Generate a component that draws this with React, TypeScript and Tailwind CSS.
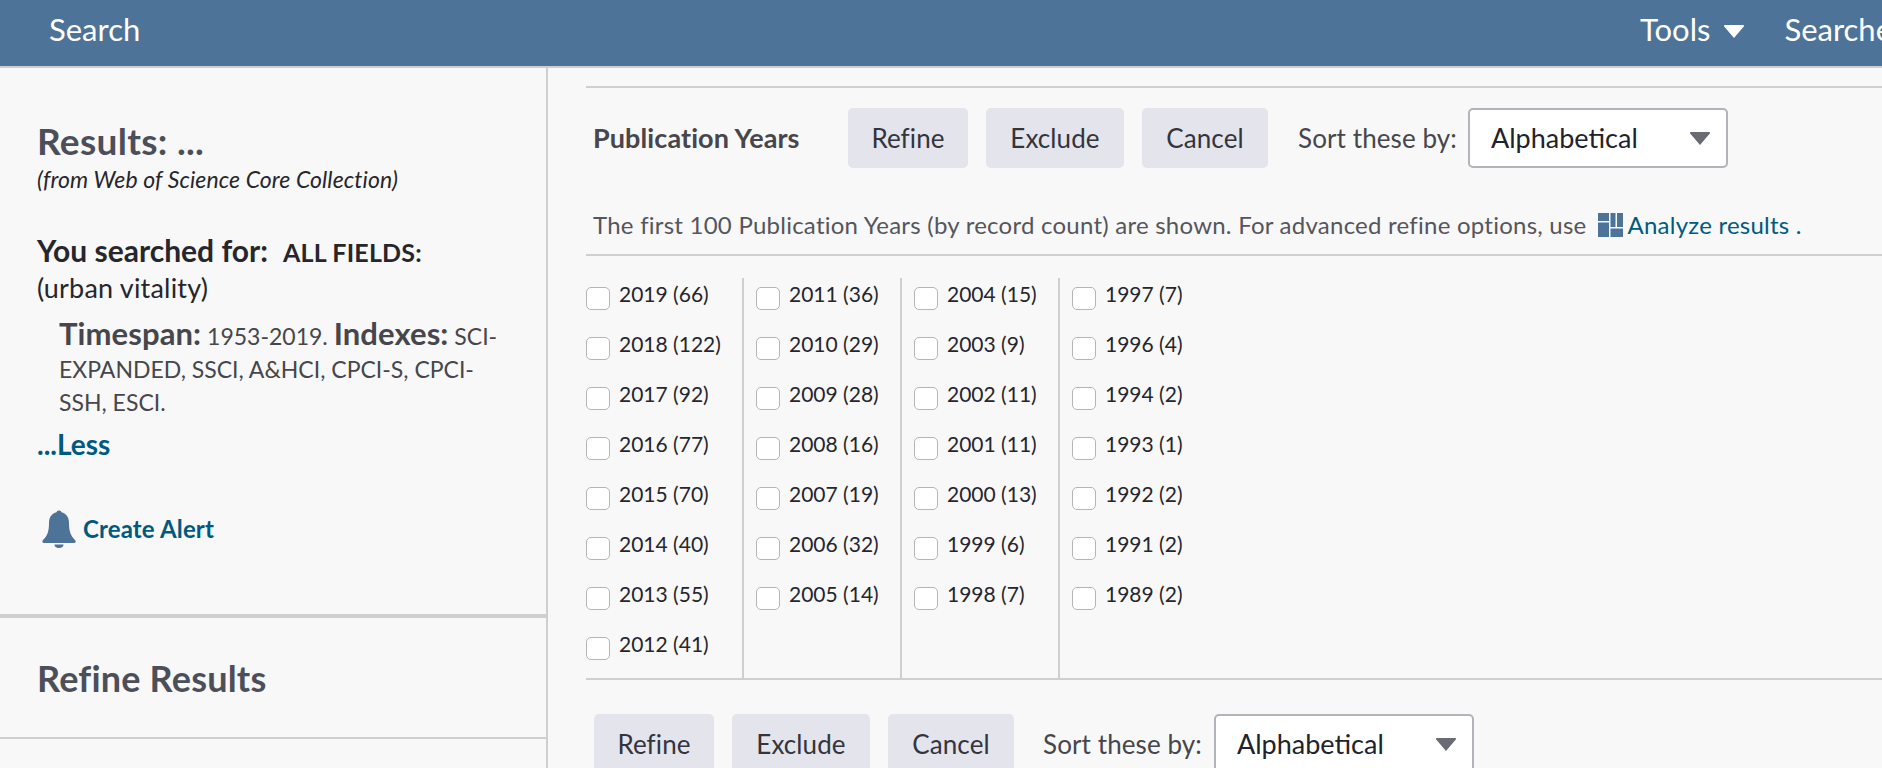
import type { ReactNode } from "react";

const FONT = "font-['Lato','Liberation_Sans',sans-serif]";

const columns = [
  ["2019 (66)", "2018 (122)", "2017 (92)", "2016 (77)", "2015 (70)", "2014 (40)", "2013 (55)", "2012 (41)"],
  ["2011 (36)", "2010 (29)", "2009 (28)", "2008 (16)", "2007 (19)", "2006 (32)", "2005 (14)"],
  ["2004 (15)", "2003 (9)", "2002 (11)", "2001 (11)", "2000 (13)", "1999 (6)", "1998 (7)"],
  ["1997 (7)", "1996 (4)", "1994 (2)", "1993 (1)", "1992 (2)", "1991 (2)", "1989 (2)"],
];

function ActionButton({ children, width }: { children: ReactNode; width: string }) {
  return (
    <button className={`${width} h-[60px] shrink-0 rounded-[5px] bg-[#e3e4ec] text-[26px] tracking-[0.1px] text-[#34343c]`}>
      {children}
    </button>
  );
}

function SortSelect() {
  return (
    <div className="flex items-center shrink-0 w-[260px] h-[60px] rounded-[5px] border-2 border-[#b3b3ba] bg-white pl-[21px] pr-[16px]">
      <span className="flex-1 text-[27px] text-[#22222a]">Alphabetical</span>
      <svg width="20" height="13" viewBox="0 0 20 13" className="fill-[#6a6a74]">
        <path d="M1 0h18c1 0 1.400 1 .8 1.600L10 13 .2 1.600C-.4 1 0 0 1 0z" />
      </svg>
    </div>
  );
}

function ToolbarButtons() {
  return (
    <>
      <ActionButton width="w-[120px]">Refine</ActionButton>
      <ActionButton width="w-[138px] ml-[18px]">Exclude</ActionButton>
      <ActionButton width="w-[126px] ml-[18px]">Cancel</ActionButton>
    </>
  );
}

function YearColumn({ years, first }: { years: string[]; first: boolean }) {
  return (
    <div
      className={
        first
          ? "w-[158px] flex flex-col gap-4 pb-4 border-r-2 border-[#cfcfcf]"
          : "w-[158px] flex flex-col gap-4 pb-4 pl-[12px] border-r-2 border-[#cfcfcf] last:border-r-0"
      }
    >
      {years.map((y) => (
        <label key={y} className="flex items-start h-[34px] gap-[9px]">
          <input type="checkbox" className="appearance-none mt-[9px] w-6 h-[23px] rounded-[5px] border border-[#b5b5b5] bg-white shrink-0" />
          <span className="-mt-px text-[21px] leading-[34px] text-[#26262c] whitespace-nowrap">{y}</span>
        </label>
      ))}
    </div>
  );
}

export default function App() {
  return (
    <div className={`${FONT} w-full h-[768px] overflow-hidden bg-[#f8f8f8] flex flex-col`}>
      <header className="h-[68px] shrink-0 flex items-center bg-[#4e7398] border-b-2 border-[#cfcfcf] pl-[49px] pb-[8px] text-white text-[31px]">
        <span>Search</span>
        <div className="flex-1" />
        <div className="w-[242px] overflow-hidden flex items-center whitespace-nowrap">
          <span>Tools</span>
          <svg width="20" height="13" viewBox="0 0 20 13" className="ml-[14px] mt-[4px] fill-white shrink-0">
            <path d="M1 0h18c1 0 1.400 1 .8 1.600L10 13 .2 1.600C-.4 1 0 0 1 0z" />
          </svg>
          <span className="ml-[40px]">Searches</span>
        </div>
      </header>

      <div className="flex flex-1 min-h-0">
        <aside className="w-[548px] shrink-0 border-r-2 border-[#cfcfcf] flex flex-col">
          <div className="h-[546px] shrink-0 pl-[37px] pt-[52px] pr-[40px]">
            <h2 className="text-[37px] leading-[42px] font-bold tracking-[0.3px] text-[#4c4f5a]">Results: ...</h2>
            <p className="mt-[2px] text-[23px] leading-[30px] italic tracking-[0.1px] text-[#26262c] whitespace-nowrap">(from Web of Science Core Collection)</p>
            <p className="mt-[38px] text-[30px] leading-[36px] font-bold text-[#26262c] whitespace-nowrap">
              You searched for:<span className="ml-[15px] text-[25px] tracking-[0.2px]">ALL FIELDS:</span>
            </p>
            <p className="mt-px text-[27px] leading-[34px] tracking-[0.2px] text-[#26262c]">(urban vitality)</p>
            <p className="pl-[22px] mt-[12px] text-[23px] leading-[33px] text-[#46464c]">
              <b className="text-[31px] tracking-[0.1px]">Timespan:</b> 1953-2019. <b className="text-[31px] tracking-[0.1px]">Indexes:</b> SCI-EXPANDED, SSCI, A&amp;HCI, CPCI-S, CPCI-SSH, ESCI.
            </p>
            <a className="block mt-[8px] text-[28px] leading-[34px] font-bold text-[#005a80]">...Less</a>
            <div className="flex items-center mt-[48px] h-[40px]">
              <svg width="34" height="38" viewBox="0 0 34 38" className="ml-[5px] fill-[#4e7398]">
                <circle cx="17" cy="3" r="2.6" />
                <path d="M17 2c6 0 10 4 10 11 0 9 2 13 6 17 1 1 1 3-1 3H2c-2 0-2-2-1-3 4-4 6-8 6-17C7 6 11 2 17 2z" />
                <path d="M12.500 34.500h9a4.500 3.500 0 0 1-9 0z" />
              </svg>
              <a className="ml-[7px] text-[24px] font-bold tracking-[0.15px] text-[#005a80]">Create Alert</a>
            </div>
          </div>
          <div className="h-[125px] shrink-0 border-t-4 border-b-2 border-[#cfcfcf] pl-[37px] flex items-center">
            <h2 className="text-[36px] font-bold tracking-[0.2px] text-[#4c4f5a]">Refine Results</h2>
          </div>
        </aside>

        <main className="flex-1 min-w-0 pl-[38px] pt-[18px]">
          <div className="border-t-2 border-[#cfcfcf] pt-[20px]">
            <div className="flex items-center">
              <span className="pl-[7px] w-[262px] shrink-0 text-[27px] font-bold tracking-[0.1px] text-[#46464c] whitespace-nowrap">Publication Years</span>
              <ToolbarButtons />
              <span className="ml-[30px] mr-[11px] text-[26px] tracking-[0.1px] text-[#46464c] whitespace-nowrap">Sort these by:</span>
              <SortSelect />
            </div>
            <p className="flex items-center pl-[7px] pt-[43px] pb-[15px] h-[86px] text-[24px] leading-[28px] tracking-[0.24px] text-[#55555c] whitespace-nowrap">
              The first 100 Publication Years (by record count) are shown. For advanced refine options, use
              <svg width="25" height="24" viewBox="0 0 25 24" className="ml-[11px] mr-[5px] fill-[#4e7398] shrink-0">
                <path d="M0 0h11v8H0zM12.500 0h5v14h-5zM19 0h6v14h-6zM0 9.500h11V24H0zM12.500 15.500H25V24H12.500z" />
              </svg>
              <a className="text-[#005a80]">Analyze results .</a>
            </p>
          </div>

          <div className="border-t-2 border-[#cfcfcf] pt-[22px]">
            <div className="flex h-[400px]">
              {columns.map((col, i) => (
                <YearColumn key={col[0]} years={col} first={i === 0} />
              ))}
            </div>
          </div>

          <div className="border-t-2 border-[#cfcfcf] pt-[34px] pl-[8px] flex items-center">
            <ToolbarButtons />
            <span className="ml-[29px] mr-[12px] text-[26px] tracking-[0.1px] text-[#46464c] whitespace-nowrap">Sort these by:</span>
            <SortSelect />
          </div>
        </main>
      </div>
    </div>
  );
}
